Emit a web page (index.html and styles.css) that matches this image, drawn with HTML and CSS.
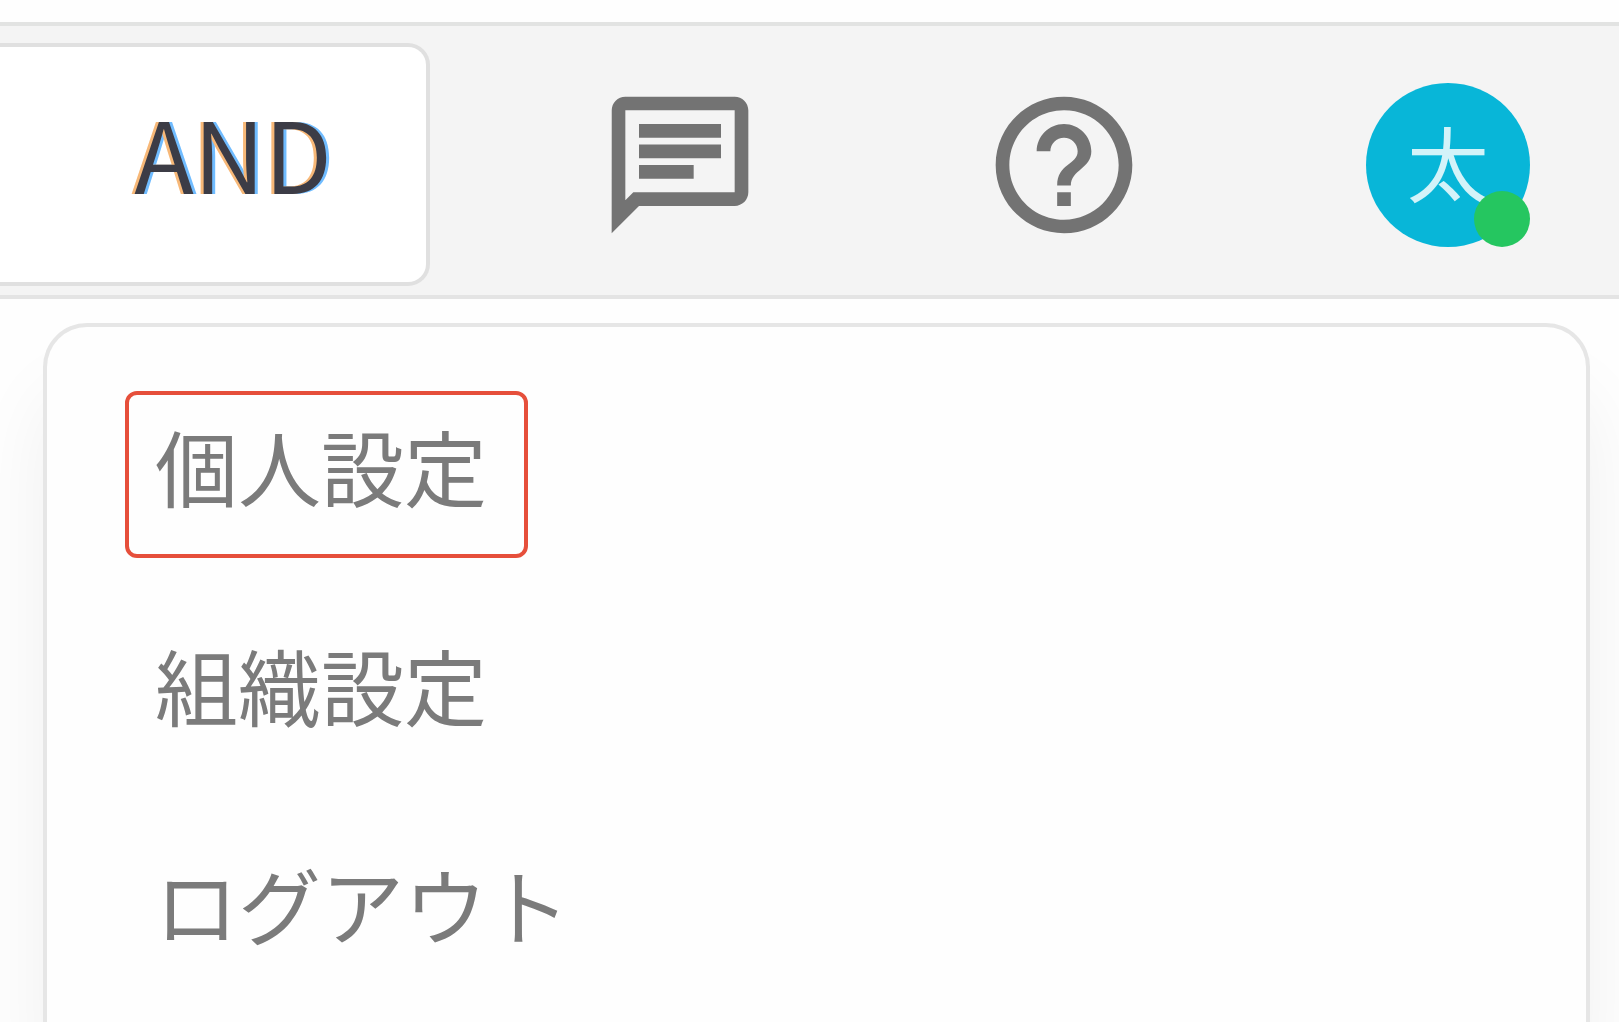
FILE: index.html
```html
<!DOCTYPE html>
<html lang="ja">
<head>
<meta charset="utf-8">
<title>ユーザーメニュー</title>
<link rel="stylesheet" href="styles.css">
</head>
<body>
<header class="topbar">
  <div class="search">
    <button class="search-mode" type="button">AND</button>
  </div>
  <nav class="actions">
    <button class="icon-button" type="button" aria-label="チャット">
      <svg class="icon" viewBox="0 0 24 24" aria-hidden="true"><path d="M4 4h16v12H5.17L4 17.17V4m0-2c-1.1 0-1.99.9-1.99 2L2 22l4-4h14c1.1 0 2-.9 2-2V4c0-1.1-.9-2-2-2H4zm2 10h8v2H6v-2zm0-3h12v2H6V9zm0-3h12v2H6V6z"/></svg>
    </button>
    <button class="icon-button" type="button" aria-label="ヘルプ">
      <svg class="icon" viewBox="0 0 24 24" aria-hidden="true"><path d="M11 18h2v-2h-2v2zm1-16C6.48 2 2 6.48 2 12s4.48 10 10 10 10-4.480 10-10S17.520 2 12 2zm0 18c-4.410 0-8-3.590-8-8s3.590-8 8-8 8 3.590 8 8-3.590 8-8 8zm0-14c-2.210 0-4 1.790-4 4h2c0-1.100.9-2 2-2s2 .9 2 2c0 2-3 1.750-3 5h2c0-2.250 3-2.500 3-5 0-2.210-1.790-4-4-4z"/></svg>
    </button>
    <button class="icon-button avatar" type="button">太<span class="status"></span></button>
  </nav>
</header>
<nav class="menu">
  <a class="menu-item menu-item-active" href="#personal">個人設定</a>
  <a class="menu-item" href="#organization">組織設定</a>
  <a class="menu-item" href="#logout">ログアウト</a>
</nav>
</body>
</html>
```
FILE: styles.css
```css
* {
  box-sizing: border-box;
}

body {
  margin: 0;
  padding-top: 22px;
  min-height: 100vh;
  display: flex;
  flex-direction: column;
  background: #fefefe;
  font-family: "Noto Sans CJK JP", sans-serif;
}

button {
  margin: 0;
  padding: 0;
  border: 0;
  background: none;
  font-family: inherit;
}

.topbar {
  display: flex;
  align-items: center;
  justify-content: space-between;
  padding: 17px 89px 9px 0;
  border-top: 4px solid #e2e3e2;
  border-bottom: 4px solid #e4e4e4;
  background: #f4f4f4;
}

.search {
  width: 430px;
  height: 243px;
  padding-right: 94px;
  display: flex;
  align-items: center;
  justify-content: flex-end;
  border: 4px solid #e0e0e0;
  border-left: 0;
  border-radius: 0 22px 22px 0;
  background: #fff;
}

.search-mode {
  padding-bottom: 28px;
  font-size: 98px;
  line-height: 130px;
  color: #3c3c46;
  text-shadow: -3px 0 #f7b878, 3px 0 #70bcff;
}

.actions {
  display: flex;
  gap: 220px;
}

.icon-button {
  width: 164px;
  height: 164px;
}

.icon {
  display: block;
  width: 100%;
  height: 100%;
  fill: #737373;
}

.avatar {
  position: relative;
  padding-bottom: 8px;
  border-radius: 50%;
  background: #08b6d8;
  color: #d3f3f9;
  font-size: 82px;
  line-height: 156px;
}

.status {
  position: absolute;
  right: 0;
  bottom: 0;
  width: 56px;
  height: 56px;
  border-radius: 50%;
  background: #25c660;
}

.menu {
  flex: 1;
  margin: 24px 29px 0 43px;
  padding: 64px 78px 0;
  display: flex;
  flex-direction: column;
  align-items: flex-start;
  gap: 52px;
  border: 4px solid #e6e6e6;
  border-bottom: 0;
  border-radius: 44px 44px 0 0;
  background: #fefefe;
  box-shadow: 0 68px 80px rgba(0, 0, 0, 0.06);
}

.menu-item {
  padding: 0 37px 18px 26px;
  border: 4px solid transparent;
  border-radius: 12px;
  font-size: 83px;
  line-height: 141px;
  color: #7b7b7b;
  text-decoration: none;
}

.menu-item-active {
  border-color: #e64f3b;
}
```
